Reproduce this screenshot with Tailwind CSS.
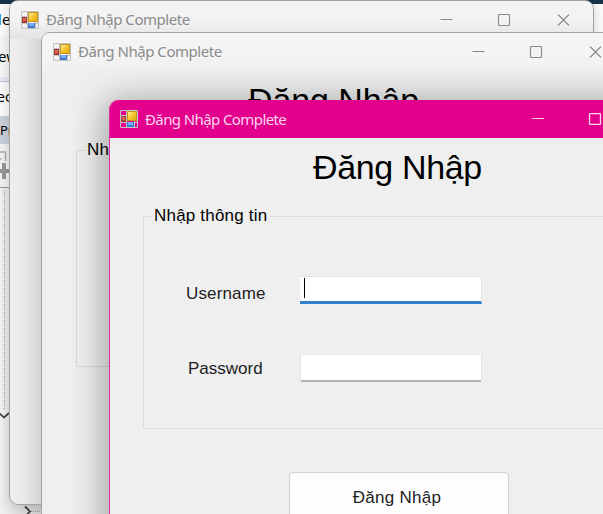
<!DOCTYPE html>
<html lang="vi">
<head>
<meta charset="utf-8">
<title>Đăng Nhập Complete</title>
<script src="https://cdn.jsdelivr.net/npm/@tailwindcss/browser@4"></script>
</head>
<body class="w-[603px] h-[514px] overflow-hidden">
<svg class="absolute size-0">
  <linearGradient id="gold" x2="1" y2="1"><stop stop-color="#fff0a0"/><stop offset=".5" stop-color="#f5c52c"/><stop offset="1" stop-color="#e3ae10"/></linearGradient>
  <symbol id="app" viewBox="0 0 18 18">
    <path d="M.5.5h17v17H.5z" fill="none" stroke="#c3c3c3"/>
    <path d="M1 5.500h7M1 12.500h16M6.500 1v16M14.500 11v6" stroke="#c3c3c3"/>
    <rect x="7" y="1" width="10" height="10" fill="#c4921a"/><rect x="8" y="2" width="8" height="8" fill="url(#gold)"/>
    <rect x="1" y="6" width="5" height="6" fill="#a83a34"/><rect x="2" y="7" width="3" height="3" fill="#d9665b"/>
    <rect x="7" y="12" width="7" height="5" fill="#3f78d4"/><rect x="8" y="12" width="5" height="3" fill="#79acf5"/>
  </symbol>
</svg>
<main class="relative w-[603px] h-[514px] overflow-hidden bg-[#f4f4f4] font-['Noto_Sans','Open_Sans',sans-serif] text-black">
  <!-- Editor strip behind the windows -->
  <div class="flex flex-col w-full h-full text-[15px]">
    <div class="h-[4px] bg-[#17354a]"></div>
    <div class="h-[32px] leading-[31px] -indent-[2px] bg-[#fafafa]"><span class="text-[#1c78c8]">l</span><span>e</span></div>
    <div class="h-[41px] leading-[41px] -indent-[2px]">ew</div>
    <div class="h-[5px] bg-[#e7e9f0] border-b border-[#bfc5d3]"></div>
    <div class="h-[34px] leading-[29px] text-[14px] -indent-[3px] bg-[#fafafa]">ec</div>
    <div class="h-[28px] leading-[28px] text-[13px] bg-[#c9cfda]">Pr</div>
    <div class="h-[44px] border-b border-[#8c98a6] bg-[#f1f1f1]">
      <svg class="w-[12px] h-[43px]" viewBox="0 0 12 43"><path d="M0 8h5.500v9M0 15h1.500" fill="none" stroke="#aaa" stroke-width="1.500"/><path d="M4 19v16M0 27h10" stroke="#969696" stroke-width="4"/></svg>
    </div>
    <div class="flex-1 bg-gradient-to-r from-[#f0f0f0] to-[#d0d0d0] to-[40px]">
      <svg class="w-[50px] h-[326px]" viewBox="0 0 50 326" fill="none"><path d="M4.500 2v220M31 323.500h14" stroke="#999" stroke-dasharray="1 1"/><path d="M-1 225l5 4.500 5-4.500M25 318.500l5 5-5 5" stroke="#444" stroke-width="1.800"/></svg>
    </div>
  </div>

  <!-- Rear window -->
  <section class="absolute left-[9px] top-0 w-[585px] h-[505px] rounded-[9px] border border-[#a3a3a3] bg-gradient-to-r from-[#efefef] via-[#e8e8e8] via-[14px] to-[#d0d0d0] to-[34px] shadow-[0_3px_12px_rgba(0,0,0,0.16)] overflow-hidden">
    <header class="flex items-center h-[38px] pl-[11px] bg-gradient-to-b from-[#f3f3f3] from-50% to-[#e3e3e3] text-[#8b8b8b]">
      <svg class="size-[18px]"><use href="#app"/></svg>
      <span class="ml-[7px] -mt-[2px] text-[15px] tracking-[-0.46px]">Đăng Nhập Complete</span>
      <svg class="ml-auto mr-[23px] w-[130px] h-[12px]" viewBox="0 0 130 12" fill="none" stroke="currentColor" stroke-width="1.200"><path d="M.5 5.500h12M118 .5l11 11M129 .5l-11 11"/><rect x="58.500" y=".5" width="11" height="11" rx="1"/></svg>
    </header>
  </section>

  <!-- Middle window -->
  <section class="absolute left-[41px] top-[32px] w-[585px] h-[505px] rounded-[9px] border border-[#a3a3a3] bg-[#efefef] overflow-hidden">
    <header class="flex items-center h-[37px] pl-[11px] bg-gradient-to-b from-[#f4f4f4] from-60% to-[#f0f0f0] text-[#8b8b8b]">
      <svg class="size-[18px]"><use href="#app"/></svg>
      <span class="ml-[7px] text-[15px] tracking-[-0.46px]">Đăng Nhập Complete</span>
      <svg class="ml-auto mr-[23px] w-[130px] h-[12px]" viewBox="0 0 130 12" fill="none" stroke="currentColor" stroke-width="1.200"><path d="M.5 5.500h12M118 .5l11 11M129 .5l-11 11"/><rect x="58.500" y=".5" width="11" height="11" rx="1"/></svg>
    </header>
    <h1 class="pl-[206px] pt-[11px] h-[70px] font-['Liberation_Sans',sans-serif] text-[34px] tracking-[-0.1px] leading-[38px] whitespace-nowrap">Đăng Nhập</h1>
    <fieldset class="ml-[34px] mr-[34px] h-[227px] border border-[#d9d9d9] pl-[7px] font-['Liberation_Sans',sans-serif] text-[17px]"><legend class="px-[3px] leading-[20px] tracking-[0.2px]">Nhập thông tin</legend></fieldset>
  </section>

  <!-- Active window -->
  <section class="absolute left-[109px] top-[100px] w-[585px] h-[505px] rounded-[9px] border-l border-[#e62aa2] bg-[#efefef] shadow-[0_5px_34px_5px_rgba(0,0,0,0.32)] overflow-hidden font-['Liberation_Sans',sans-serif]">
    <header class="flex items-center h-[38px] pl-[10px] bg-[#e3008c] text-[#fbd5ec] font-['Noto_Sans','Open_Sans',sans-serif]">
      <svg class="size-[18px]"><use href="#app"/></svg>
      <span class="ml-[7px] text-[15px] tracking-[-0.6px]">Đăng Nhập Complete</span>
      <svg class="ml-auto mr-[32px] w-[130px] h-[12px]" viewBox="0 0 130 12" fill="none" stroke="currentColor"><path d="M0 5.500h12M118 .5l11 11M129 .5l-11 11"/><rect x="57.500" y=".5" width="11" height="11" rx="1" stroke-width="1.300"/></svg>
    </header>
    <h1 class="pl-[203px] pt-[10px] h-[67px] text-[34px] tracking-[-0.35px] leading-[38px] whitespace-nowrap">Đăng Nhập</h1>
    <fieldset class="ml-[33px] mr-[34px] h-[224px] border border-[#dcdcdc] pl-[7px] text-[17px]">
      <legend class="px-[3px] leading-[22px] tracking-[0.2px]">Nhập thông tin</legend>
      <div class="flex flex-col gap-[50px] pt-[49px] text-[#222]">
        <label class="flex h-[28px]"><span class="w-[149px] pl-[35px] leading-[35px] tracking-[0.15px]">Username</span>
          <span class="w-[182px] h-[28px] bg-white border-t border-r border-[#e3e3e3] border-b-[3px] border-b-[#2f7fcd] pt-px pl-[4px]"><i class="block w-px h-[20px] bg-black"></i></span></label>
        <label class="flex h-[28px]"><span class="w-[149px] pl-[37px] leading-[29px]">Password</span>
          <span class="w-[182px] h-[28px] bg-white rounded-[2px] border border-[#e5e5e5] border-b-2 border-b-[#b3b3b3]"></span></label>
      </div>
    </fieldset>
    <button class="block ml-[179px] mt-[43px] w-[220px] h-[51px] pr-[4px] rounded-[4px] border border-[#d0d0d0] bg-[#fdfdfd] text-[17px] tracking-[0.3px] text-[#222]">Đăng Nhập</button>
  </section>
</main>
</body>
</html>
